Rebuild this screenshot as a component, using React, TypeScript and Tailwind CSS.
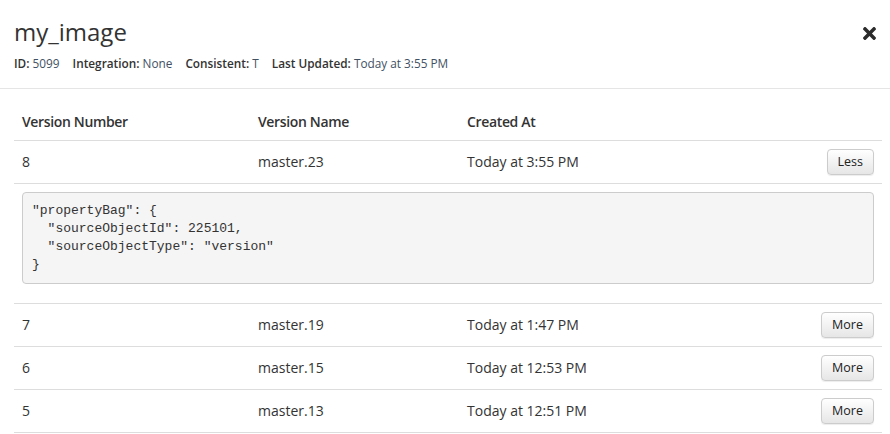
import React, { useState } from "react";

type Version = {
  number: number;
  name: string;
  createdAt: string;
};

const versions: Version[] = [
  { number: 8, name: "master.23", createdAt: "Today at 3:55 PM" },
  { number: 7, name: "master.19", createdAt: "Today at 1:47 PM" },
  { number: 6, name: "master.15", createdAt: "Today at 12:53 PM" },
  { number: 5, name: "master.13", createdAt: "Today at 12:51 PM" },
];

const propertyBag = `"propertyBag": {
  "sourceObjectId": 225101,
  "sourceObjectType": "version"
}`;

function CloseIcon() {
  return (
    <svg width="13" height="13" viewBox="0 80 352 352" fill="#2b2b2b">
      <path d="M242.72 256l100.07-100.07c12.28-12.28 12.28-32.19 0-44.48l-22.24-22.24c-12.28-12.28-32.19-12.28-44.48 0L176 189.28 75.93 89.21c-12.28-12.28-32.19-12.28-44.48 0L9.21 111.45c-12.28 12.28-12.28 32.19 0 44.48L109.28 256 9.21 356.07c-12.28 12.28-12.28 32.19 0 44.48l22.24 22.24c12.28 12.28 32.2 12.28 44.48 0L176 322.72l100.07 100.07c12.28 12.28 32.2 12.28 44.48 0l22.24-22.24c12.28-12.28 12.28-32.19 0-44.48L242.72 256z" />
    </svg>
  );
}

function MetaItem({ label, value }: { label: string; value: string }) {
  return (
    <span>
      <span className="font-semibold text-[#333]">{label}:</span>{" "}
      <span className="text-[#3f5163]">{value}</span>
    </span>
  );
}

export default function App() {
  const [expanded, setExpanded] = useState<number | null>(8);

  return (
    <div className="w-[890px] h-[434px] bg-white text-[#333] overflow-hidden font-['Open_Sans',sans-serif]">
      <div className="flex items-start justify-between px-[14px] pt-[19px] pb-[16px] border-b border-[#e5e5e5]">
        <div>
          <h4 className="text-[24px] leading-[26px] font-normal">my_image</h4>
          <div className="mt-[10px] text-[11.8px] leading-[17px] flex gap-[13px]">
            <MetaItem label="ID" value="5099" />
            <MetaItem label="Integration" value="None" />
            <MetaItem label="Consistent" value="T" />
            <MetaItem label="Last Updated" value="Today at 3:55 PM" />
          </div>
        </div>
        <button className="mt-[8px] cursor-pointer">
          <CloseIcon />
        </button>
      </div>

      <div className="pl-[14px] pr-[8px] pt-[15px]">
        <table className="w-full table-fixed text-left border-collapse text-[14px] leading-[20px]">
          <colgroup>
            <col className="w-[236px]" />
            <col className="w-[209px]" />
            <col />
            <col className="w-[120px]" />
          </colgroup>
          <thead>
            <tr className="border-b border-[#ddd] font-semibold tracking-[-0.35px]">
              <th className="p-2 font-semibold">Version Number</th>
              <th className="p-2 font-semibold">Version Name</th>
              <th className="p-2 font-semibold">Created At</th>
              <th className="p-2"></th>
            </tr>
          </thead>
          <tbody>
            {versions.map((v) => (
              <React.Fragment key={v.number}>
                <tr className="border-b border-[#ddd]">
                  <td className="p-2 align-middle">{v.number}</td>
                  <td className="p-2 align-middle">{v.name}</td>
                  <td className="p-2 align-middle">{v.createdAt}</td>
                  <td className="p-2 align-middle text-right">
                    <button
                      onClick={() => setExpanded(expanded === v.number ? null : v.number)}
                      className="px-[10px] py-[3px] text-[12.5px] leading-[18px] text-[#222] border border-[#ccc] rounded-[4px] bg-linear-to-b from-white to-[#e6e6e6] shadow-[0_1px_1px_rgba(0,0,0,0.075)] cursor-pointer"
                    >
                      {expanded === v.number ? "Less" : "More"}
                    </button>
                  </td>
                </tr>
                {expanded === v.number && (
                  <tr className="border-b border-[#ddd]">
                    <td colSpan={4} className="p-2">
                      <pre className="mb-[11px] p-[9px] bg-[#f5f5f5] border border-[#ccc] rounded-[4px] text-[13px] leading-[18px] text-[#333] font-['Liberation_Mono',monospace]">
                        {propertyBag}
                      </pre>
                    </td>
                  </tr>
                )}
              </React.Fragment>
            ))}
          </tbody>
        </table>
      </div>
    </div>
  );
}
